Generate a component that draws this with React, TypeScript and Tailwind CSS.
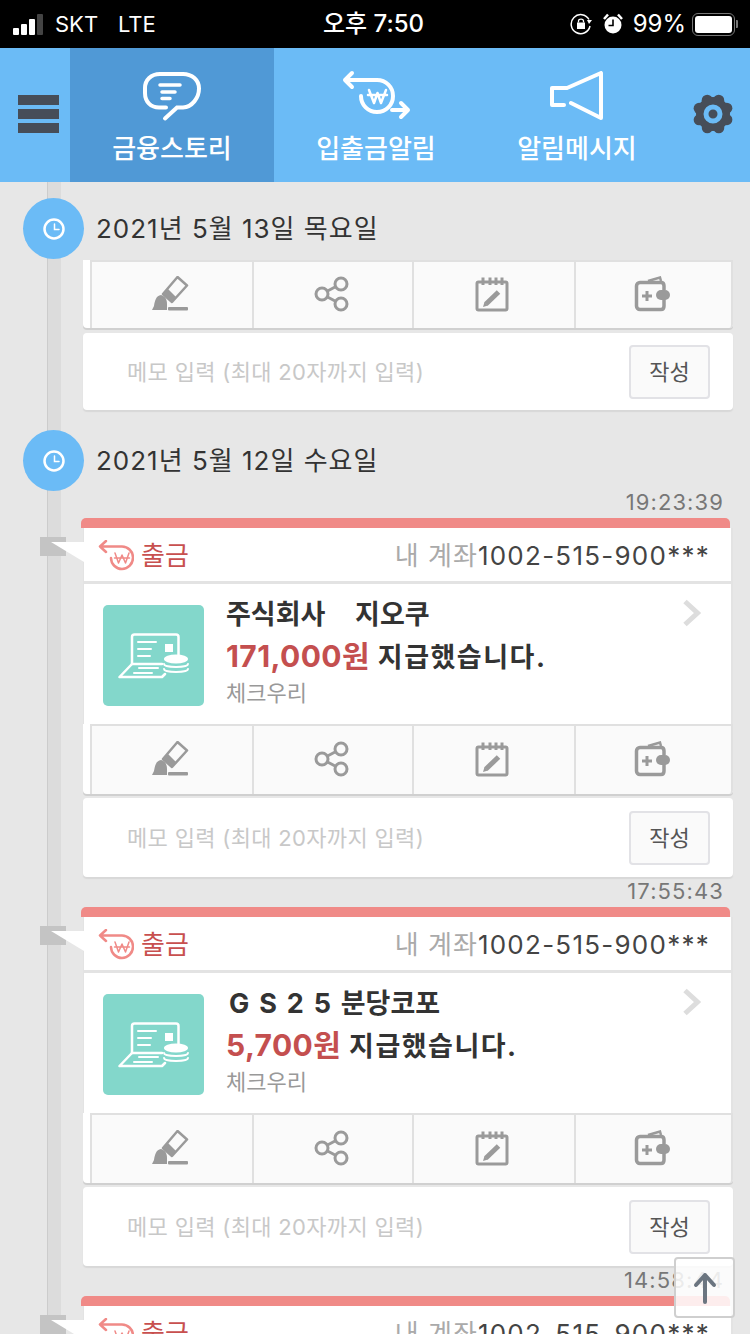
import { ReactNode } from 'react';

const FONT = 'font-["Inter","Noto_Sans_CJK_KR",sans-serif]';

const Hamburger = () => (
  <div className="-mt-[3px] flex w-[70px] shrink-0 flex-col gap-[4px] pl-[18px]">
    <div className="h-[10px] w-[41px] bg-[#464D58]" />
    <div className="h-[10px] w-[41px] bg-[#464D58]" />
    <div className="h-[10px] w-[41px] bg-[#464D58]" />
  </div>
);

const BubbleIcon = () => (
  <svg width="60" height="52" viewBox="0 0 60 52" fill="none" stroke="#fff" strokeLinecap="round">
    <path
      d="M24 36.500H17C9 36.500 3 31 3 22V17C3 9 9 3 18 3H41C50 3 57 9 57 17.500C57 27 50 36 41 36.500H35L23 47.500"
      strokeWidth="4"
    />
    <path d="M18 14H38M20 21H33M20 27.500H28" strokeWidth="3.500" />
  </svg>
);

const ExchangeIcon = () => (
  <svg width="100" height="70" viewBox="0 0 100 70" fill="none" stroke="#fff" strokeLinecap="round" strokeLinejoin="round">
    <path d="M22 13L15 20L22 27M15 20H47C56 20 63 27 63 36C63 45 56 52 47 52C38 52 31 45 31 36" strokeWidth="4" />
    <path d="M62 50H78M71 43L78 50L71 57" strokeWidth="4" />
    <path d="M39 30L44 43L47.500 33L51 43L56 30M38 35H57" strokeWidth="2.500" />
  </svg>
);

const MegaphoneIcon = () => (
  <svg width="56" height="50" viewBox="0 0 56 50" fill="none" stroke="#fff" strokeWidth="4" strokeLinecap="round" strokeLinejoin="round">
    <path d="M15 34H3V17H18L52 2V47L22 32" />
  </svg>
);

const GEAR_LOBES = [0, 45, 90, 135, 180, 225, 270, 315];

const GearIcon = () => (
  <svg width="42" height="42" viewBox="0 0 42 42">
    {GEAR_LOBES.map((deg) => (
      <circle
        key={deg}
        cx={21 + 15 * Math.cos((deg * Math.PI) / 180 + 0.39)}
        cy={21 + 15 * Math.sin((deg * Math.PI) / 180 + 0.39)}
        r="5.500"
        fill="#464D58"
      />
    ))}
    <circle cx="21" cy="21" r="17" fill="#464D58" />
    <circle cx="21" cy="21" r="7" fill="none" stroke="#6BBBF6" strokeWidth="5" />
  </svg>
);

const ClockIcon = () => (
  <svg width="24" height="24" viewBox="0 0 24 24" fill="none" stroke="#fff" strokeLinecap="round">
    <circle cx="12" cy="12" r="9.500" strokeWidth="2.500" />
    <path d="M12.500 7V12.500H17" strokeWidth="1.500" />
  </svg>
);

const BrushIcon = () => (
  <svg width="38" height="36" viewBox="0 0 38 36" fill="#9A9A9A">
    <path d="M26.500 1L36 9.500L21 26L12 18Z" fill="none" stroke="#9A9A9A" strokeWidth="2.500" strokeLinejoin="round" />
    <path d="M17 13L25 21L21 26L12 18Z" />
    <path d="M10 19C5 20 4 24 3 30L1 34H16V28C16 23 14 20 10 19Z" />
    <rect x="17" y="31" width="20" height="3.500" rx="1" />
  </svg>
);

const ShareIcon = () => (
  <svg className="ml-[2px]" width="36" height="36" viewBox="0 0 36 36" fill="none" stroke="#9A9A9A" strokeWidth="3">
    <circle cx="8" cy="18" r="6" />
    <circle cx="27" cy="8" r="6" />
    <circle cx="27" cy="28" r="6" />
    <path d="M13.500 15L22 10.500M13.500 21L22 25.500" />
  </svg>
);

const CalendarIcon = () => (
  <svg width="34" height="36" viewBox="0 0 34 36" fill="none" stroke="#9A9A9A">
    <rect x="2" y="6" width="30" height="28" rx="1.500" strokeWidth="3" />
    <path d="M8 1.500V9M15 1.500V9M21 1.500V9M27 1.500V9" strokeWidth="3" />
    <path d="M23.500 16L11 28" strokeWidth="5" />
    <path d="M8 31L9.500 26L13 29.500Z" fill="#9A9A9A" stroke="none" />
  </svg>
);

const WalletIcon = () => (
  <svg className="ml-[3px]" width="38" height="36" viewBox="0 0 38 36" fill="none" stroke="#9A9A9A">
    <path d="M30 23V30C30 32 29 33.500 27 33.500H6C4 33.500 2.500 32 2.500 30V10C2.500 8 4 6.500 6 6.500H27C29 6.500 30 8 30 10V14" strokeWidth="3.500" />
    <path d="M14 5L26 1.500L27 5" strokeWidth="2.500" />
    <path d="M8 20H18M13 15V25" strokeWidth="3" />
    <rect x="22" y="14" width="14" height="10" rx="5" fill="#9A9A9A" stroke="none" />
  </svg>
);

const WithdrawIcon = () => (
  <svg width="36" height="32" viewBox="0 0 36 32" fill="none" stroke="#F08A87" strokeLinecap="round" strokeLinejoin="round">
    <path d="M8 1L2 6.500L8 12M2 6.500H24C30 6.500 35 11.500 35 17.500C35 24 30 29 24 29C18 29 13 24 13 18" strokeWidth="2.500" />
    <path d="M17 13L20.500 23L24 15L27.500 23L31 13M16.500 18H31.500" strokeWidth="1.500" />
  </svg>
);

const LaptopIcon = () => (
  <svg className="mt-[5px] ml-[4px]" width="76" height="52" viewBox="0 0 76 52" fill="none" stroke="#fff" strokeLinecap="round" strokeLinejoin="round">
    <path d="M14 32V5C14 3.500 15 2.500 16.500 2.500H58C59.500 2.500 60.500 3.500 60.500 5V24" strokeWidth="2.500" />
    <path d="M14 32L1.500 45H44L47 42M14 32H44" strokeWidth="2.500" />
    <path d="M20 10H38M20 17H33M20 24H32M21 36H40M16 41H34" strokeWidth="2" />
    <rect x="47" y="12" width="8" height="8" fill="#fff" stroke="none" />
    <ellipse cx="58" cy="27" rx="12" ry="4.500" fill="#fff" stroke="none" />
    <path d="M46 32C46 36 70 36 70 32M46 37C46 41 70 41 70 37" strokeWidth="2" />
  </svg>
);

const ChevronIcon = () => (
  <svg width="20" height="28" viewBox="0 0 20 28" fill="none" stroke="#DDDDDD" strokeWidth="5">
    <path d="M3 2.500L15.500 14L3 25.500" />
  </svg>
);

const HeaderTab = ({ icon, label, active, width }: { icon: ReactNode; label: string; active?: boolean; width: string }) => (
  <div className={`h-full shrink-0 ${width} ${active ? 'bg-[#5099D6]' : ''}`}>
    <div className="flex h-[86px] items-start justify-center">{icon}</div>
    <p className="text-center text-[26px] leading-[30px] font-medium text-white">{label}</p>
  </div>
);

const StatusBar = () => (
  <div className="flex h-[48px] items-center bg-black text-white">
    <div className="flex w-[55px] items-end gap-[2px] pl-[13px]">
      <div className="h-[7px] w-[6px] rounded-[1px] bg-white" />
      <div className="h-[11px] w-[6px] rounded-[1px] bg-white" />
      <div className="h-[16px] w-[6px] rounded-[1px] bg-white" />
      <div className="h-[21px] w-[6px] rounded-[1px] bg-[#444]" />
    </div>
    <span className="w-[63px] text-[22px] leading-none">SKT</span>
    <span className="w-[205px] text-[22px] leading-none">LTE</span>
    <span className="text-[24px] leading-none font-medium">오후 7:50</span>
    <div className="ml-auto flex items-center pr-[12px]">
      <svg width="22" height="22" viewBox="0 0 22 22" fill="none" stroke="#fff">
        <path d="M19 6.500A9.500 9.500 0 1 0 20 13" strokeWidth="1.500" />
        <path d="M17 7H22L19 11Z" fill="#fff" stroke="none" />
        <rect x="7" y="9.500" width="8" height="6.500" fill="#fff" stroke="none" />
        <path d="M8.500 9.500V8C8.500 5.500 13.500 5.500 13.500 8V9.500" strokeWidth="1.300" />
      </svg>
      <svg className="ml-[11px]" width="20" height="22" viewBox="0 0 20 22" fill="none">
        <circle cx="10" cy="12" r="8.500" fill="#fff" />
        <path d="M10 6.500V12.500H5.500" stroke="#000" strokeWidth="1.600" />
        <path d="M1 6L5 1.500M19 6L15 1.500" stroke="#fff" strokeWidth="2.500" />
      </svg>
      <span className="ml-[10px] text-[24px] leading-none">99%</span>
      <div className="ml-[6px] flex items-center">
        <div className="h-[23px] w-[43px] rounded-[6px] border-[1.5px] border-[#777] p-[2px]">
          <div className="h-full w-full rounded-[3px] bg-white" />
        </div>
        <div className="ml-[1px] h-[8px] w-[2px] rounded-r-[1px] bg-[#777]" />
      </div>
    </div>
  </div>
);

const AppHeader = () => (
  <div className="flex h-[134px] bg-[#6BBBF6]">
    <div className="flex h-full items-center">
      <Hamburger />
    </div>
    <HeaderTab active width="w-[204px]" icon={<div className="pt-[23px]"><BubbleIcon /></div>} label="금융스토리" />
    <HeaderTab width="w-[204px]" icon={<div className="ml-[8px] pt-[12px]"><ExchangeIcon /></div>} label="입출금알림" />
    <HeaderTab width="w-[198px]" icon={<div className="pt-[23px]"><MegaphoneIcon /></div>} label="알림메시지" />
    <div className="-mt-[3px] flex flex-1 items-center pl-[16px]">
      <GearIcon />
    </div>
  </div>
);

const DateRow = ({ label }: { label: string }) => (
  <div className="relative flex h-[61px] items-center pl-[23px]">
    <div className="flex h-[61px] w-[61px] items-center justify-center rounded-full bg-[#6BBBF6]">
      <ClockIcon />
    </div>
    <span className="ml-[12px] text-[26px] leading-none tracking-[1px] text-[#333]">{label}</span>
  </div>
);

const ACTIONS = [
  { width: 'w-[162px]', icon: <BrushIcon /> },
  { width: 'w-[160px]', icon: <ShareIcon /> },
  { width: 'w-[162px]', icon: <CalendarIcon /> },
  { width: 'flex-1', icon: <WalletIcon /> },
];

const ActionRow = ({ height }: { height: string }) => (
  <div className={`rounded-b-[4px] bg-white pl-[7px] shadow-[0_2px_0_#D0D0D0] ${height}`}>
    <div className="flex h-full rounded-br-[4px] border-t-2 border-r-2 border-l-2 border-[#E0E0E0] bg-[#FAFAFA]">
      {ACTIONS.map((a, i) => (
        <div
          key={i}
          className={`flex shrink-0 items-center justify-center pr-[4px] pb-[2px] ${a.width} ${i < 3 ? 'border-r-2 border-[#E0E0E0]' : ''}`}
        >
          {a.icon}
        </div>
      ))}
    </div>
  </div>
);

const MemoRow = ({ height }: { height: string }) => (
  <div className={`flex items-center justify-between rounded-[4px] bg-white pr-[23px] pl-[44px] shadow-[0_2px_1px_#D8D8D8] ${height}`}>
    <span className="text-[22px] leading-none tracking-[0.33px] text-[#C8C8C8]">메모 입력 (최대 20자까지 입력)</span>
    <div className="mt-[1px] flex h-[54px] w-[81px] items-center justify-center rounded-[4px] border-2 border-[#E2E2E6] bg-[#FAFAFA] text-[22px] leading-none text-[#555]">
      작성
    </div>
  </div>
);

const TimeRow = ({ time, first }: { time: string; first?: boolean }) => (
  <div className={`h-[30px] pt-[1px] pr-[26px] text-right text-[22px] leading-[26px] tracking-[1.1px] text-[#777] ${first ? '-mt-[3px]' : ''}`}>
    {time}
  </div>
);

const Flag = () => (
  <svg className="absolute top-[9px] left-[-44px]" width="46" height="27" viewBox="0 0 46 27">
    <rect x="0" y="0" width="26" height="19" fill="#C4C4C4" />
    <path d="M11 5L44 5V25Z" fill="#fff" />
  </svg>
);

const StoryCard = ({ title, amount, indent }: { title: string; amount: string; indent?: string }) => (
  <div className="pr-[17px] pl-[81px]">
    <div className="h-[10px] w-[649px] rounded-t-[5px] bg-[#F08A87]" />
    <div className="ml-[2px]">
      <div className="relative flex h-[53px] items-center justify-between border-r-2 border-l border-[#E3E3E3] bg-white pt-[3px] pr-[21px] pl-[14px]">
        <Flag />
        <div className="flex items-center">
          <WithdrawIcon />
          <span className="ml-[7px] text-[26px] leading-none text-[#C8504F]">출금</span>
        </div>
        <div className="text-[26px] leading-none tracking-[1px] text-[#AAA]">
          내 계좌<span className="tracking-[1.25px] text-[#444]">1002-515-900***</span>
        </div>
      </div>
      <div className="relative flex h-[143px] border-t-[3px] border-r-2 border-l border-[#E3E3E3] bg-white pt-[21px] pl-[19px]">
        <div className="flex h-[101px] w-[101px] shrink-0 items-center justify-center rounded-[5px] bg-[#83D7CB]">
          <LaptopIcon />
        </div>
        <div className="ml-[22px]">
          <p className={`mt-[-7px] text-[27px] leading-[34px] font-bold whitespace-pre text-[#333] [word-spacing:3.5px] ${indent ?? ''}`}>{title}</p>
          <p className="mt-[7px] text-[27px] leading-[34px] font-bold tracking-[1.5px] text-[#333]">
            <span className="text-[30px] tracking-[0.4px] text-[#C44F4F]">{amount}</span> 지급했습니다.
          </p>
          <p className="mt-[4px] text-[22px] leading-[28px] text-[#999]">체크우리</p>
        </div>
        <div className="absolute top-[15px] right-[29px]">
          <ChevronIcon />
        </div>
      </div>
      <ActionRow height="h-[70px]" />
      <div className="h-[4px]" />
      <MemoRow height="h-[79px]" />
    </div>
  </div>
);

export default function App() {
  return (
    <div className={`relative h-[1334px] w-[750px] overflow-hidden bg-[#E7E7E7] ${FONT}`}>
      <StatusBar />
      <AppHeader />

      <div className="relative h-[1152px] overflow-hidden">
        {/* 타임라인 세로줄 */}
        <div className="absolute top-0 bottom-0 left-[47px] w-[14px] border-l border-[#CCC] bg-[#DCDCDC]" />

        <div className="relative pt-[16px]">
          <DateRow label="2021년 5월 13일 목요일" />
          <div className="mt-[1px] pr-[17px] pl-[83px]">
            <ActionRow height="h-[68px]" />
            <div className="h-[5px]" />
            <MemoRow height="h-[77px]" />
          </div>

          <div className="h-[20px]" />
          <DateRow label="2021년 5월 12일 수요일" />

          <TimeRow first time="19:23:39" />
          <StoryCard title="주식회사   지오쿠" amount="171,000원" />
          <TimeRow time="17:55:43" />
          <StoryCard title="G S 2 5 분당코포" amount="5,700원" indent="pl-[3px]" />
          <TimeRow time="14:58:44" />
          <StoryCard title="" amount="" />
        </div>
      </div>

      {/* 맨 위로 버튼 */}
      <div className="absolute top-[1257px] left-[674px] flex h-[61px] w-[61px] items-center justify-center rounded-[4px] border-2 border-[#CFCFCF] bg-white/85">
        <svg width="32" height="34" viewBox="0 0 32 34" fill="none" stroke="#6B7580" strokeWidth="4" strokeLinecap="round" strokeLinejoin="round">
          <path d="M16 31V4M7 14L16 4L25 14" />
        </svg>
      </div>
    </div>
  );
}
